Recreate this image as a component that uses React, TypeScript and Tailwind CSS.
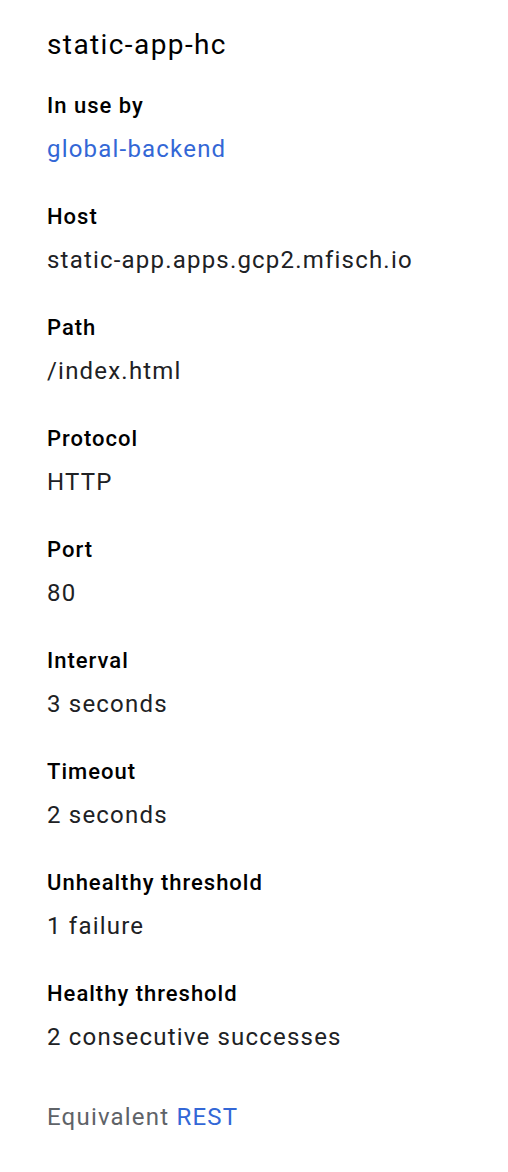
const FIELDS: { label: string; value: string; link?: boolean }[] = [
  { label: 'In use by', value: 'global-backend', link: true },
  { label: 'Host', value: 'static-app.apps.gcp2.mfisch.io' },
  { label: 'Path', value: '/index.html' },
  { label: 'Protocol', value: 'HTTP' },
  { label: 'Port', value: '80' },
  { label: 'Interval', value: '3 seconds' },
  { label: 'Timeout', value: '2 seconds' },
  { label: 'Unhealthy threshold', value: '1 failure' },
  { label: 'Healthy threshold', value: '2 consecutive successes' },
]

export default function App() {
  return (
    <div className="min-h-screen bg-white pl-[47px] pt-[25px] font-['Roboto',sans-serif] text-[#202124]">
      <h1 className="m-0 text-[28px] leading-[40px] font-normal tracking-[1.4px] text-black">static-app-hc</h1>

      <div className="mt-[21px] flex flex-col gap-[25px]">
        {FIELDS.map(f => (
          <div key={f.label} className="flex flex-col">
            <div className="text-[22px] leading-[40px] font-medium tracking-[1px] text-black">{f.label}</div>
            <div
              className={
                'text-[24px] leading-[46px] tracking-[1.2px] ' +
                (f.link ? 'text-[#3367d6]' : 'text-[#202124]')
              }
            >
              {f.value}
            </div>
          </div>
        ))}
      </div>

      <div className="mt-[37px] text-[24px] leading-[40px] tracking-[1.2px] text-[#5f6368]">
        Equivalent <span className="text-[#3367d6]">REST</span>
      </div>
    </div>
  )
}
